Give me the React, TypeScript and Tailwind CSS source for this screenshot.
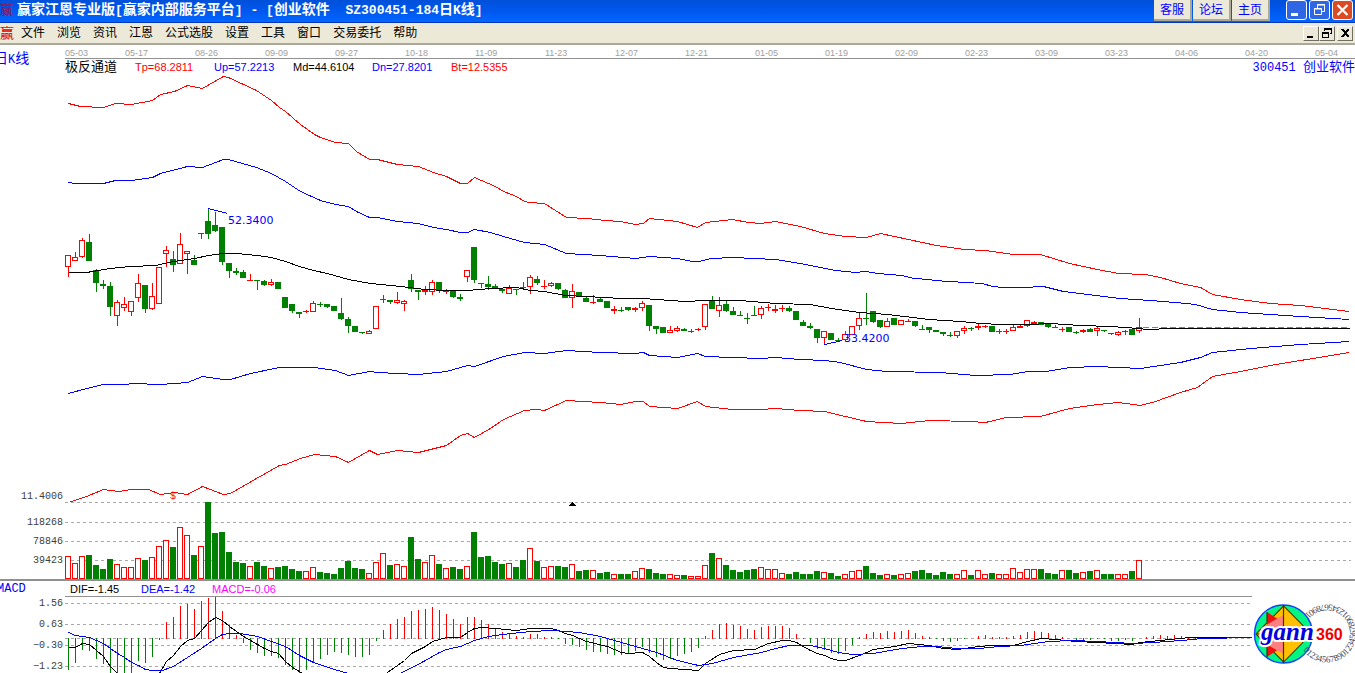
import React from 'react';

type Candle = ['r' | 'g', number, number, number, number, number];
type Point = [number, number];

const STEP = 7;
const FIRST_X = 68;
const RED = '#ff0000';
const GREEN = '#008000';
const BLUE = '#0000ff';

const MENU_ITEMS = ['文件', '浏览', '资讯', '江恩', '公式选股', '设置', '工具', '窗口', '交易委托', '帮助'];
const SERVICE_LINKS = ['客服', '论坛', '主页'];

const DATES = [
  '05-03', '05-17', '08-26', '09-09', '09-27', '10-18', '11-09', '11-23', '12-07', '12-21',
  '01-05', '01-19', '02-09', '02-23', '03-09', '03-23', '04-06', '04-20', '05-04',
];

// colour, high, body top, body bottom, low, volume top
const CANDLES: Candle[] = [
  ['r', 255, 255, 267, 277, 556], ['r', 252, 257, 261, 261, 563], ['r', 238, 240, 257, 258, 556], ['g', 234, 242, 261, 261, 555],
  ['g', 269, 270, 283, 292, 565], ['g', 280, 284, 286, 289, 569], ['g', 282, 286, 307, 316, 559], ['r', 300, 302, 316, 326, 564],
  ['r', 297, 304, 308, 311, 567], ['r', 301, 301, 312, 316, 567], ['r', 274, 283, 298, 302, 558], ['g', 285, 285, 309, 313, 560],
  ['r', 283, 296, 309, 310, 557], ['r', 267, 267, 304, 304, 546], ['r', 246, 250, 254, 267, 540], ['g', 251, 259, 265, 272, 547],
  ['r', 233, 244, 264, 264, 527], ['r', 251, 251, 254, 274, 535], ['g', 255, 260, 265, 265, 555], ['r', 233, 233, 234, 239, 546],
  ['g', 208, 221, 234, 239, 502], ['g', 212, 225, 231, 232, 533], ['g', 227, 227, 262, 265, 532], ['g', 263, 263, 271, 278, 552],
  ['g', 268, 271, 273, 275, 562], ['g', 270, 272, 278, 278, 563], ['r', 274, 280, 281, 281, 566], ['g', 280, 280, 281, 290, 562],
  ['g', 280, 281, 285, 286, 566], ['r', 279, 282, 285, 286, 568], ['g', 282, 282, 289, 289, 567], ['g', 297, 297, 308, 308, 566],
  ['g', 304, 304, 311, 313, 569], ['g', 312, 312, 314, 318, 571], ['r', 310, 311, 312, 313, 571], ['r', 301, 303, 312, 312, 567],
  ['g', 302, 304, 305, 307, 572], ['g', 304, 304, 307, 308, 573], ['g', 306, 306, 311, 311, 574], ['g', 298, 313, 319, 320, 568],
  ['g', 317, 319, 326, 333, 561], ['g', 326, 326, 332, 332, 568], ['g', 332, 332, 333, 334, 569], ['r', 330, 331, 334, 334, 573],
  ['r', 306, 306, 329, 329, 562], ['r', 295, 299, 300, 303, 553], ['g', 300, 300, 302, 304, 565], ['r', 292, 300, 303, 304, 564],
  ['r', 300, 301, 304, 311, 566], ['g', 274, 280, 289, 292, 537], ['g', 290, 290, 292, 300, 559], ['r', 286, 290, 292, 295, 562],
  ['r', 280, 282, 292, 295, 555], ['g', 282, 282, 291, 293, 564], ['r', 289, 291, 292, 294, 568], ['g', 291, 291, 297, 298, 567],
  ['g', 294, 297, 299, 301, 569], ['r', 270, 270, 277, 282, 566], ['g', 247, 247, 280, 283, 532], ['g', 283, 283, 284, 288, 557],
  ['g', 276, 284, 287, 290, 556], ['g', 284, 286, 288, 288, 562], ['g', 288, 289, 291, 293, 564], ['r', 285, 288, 294, 294, 563],
  ['g', 289, 289, 290, 295, 567], ['g', 282, 287, 288, 289, 560], ['r', 275, 277, 287, 294, 548], ['g', 276, 279, 283, 285, 561],
  ['r', 280, 286, 287, 289, 567], ['r', 282, 283, 286, 287, 566], ['g', 283, 283, 289, 290, 566], ['g', 289, 290, 298, 298, 567],
  ['r', 284, 291, 298, 308, 564], ['g', 292, 292, 296, 296, 571], ['g', 296, 298, 302, 302, 570], ['r', 295, 302, 303, 304, 570],
  ['g', 297, 299, 302, 302, 573], ['g', 301, 301, 308, 308, 572], ['r', 306, 309, 311, 314, 574], ['g', 307, 310, 311, 312, 574],
  ['g', 307, 307, 310, 311, 574], ['r', 307, 308, 310, 312, 571], ['r', 301, 303, 308, 311, 568], ['g', 305, 305, 326, 331, 569],
  ['g', 326, 326, 329, 334, 573], ['g', 327, 327, 333, 333, 574], ['r', 326, 330, 333, 333, 574], ['r', 326, 328, 331, 332, 575],
  ['g', 328, 329, 331, 331, 575], ['r', 329, 331, 332, 333, 576], ['r', 328, 329, 330, 331, 576], ['r', 304, 304, 327, 330, 565],
  ['g', 296, 300, 309, 309, 553], ['r', 297, 305, 311, 317, 558], ['g', 301, 304, 311, 312, 565], ['g', 307, 311, 315, 315, 570],
  ['g', 311, 315, 316, 316, 572], ['g', 313, 318, 319, 324, 570], ['g', 306, 315, 316, 316, 569], ['r', 306, 308, 315, 319, 567],
  ['r', 304, 307, 308, 311, 569], ['r', 305, 309, 311, 313, 569], ['r', 305, 308, 309, 312, 573], ['g', 306, 308, 311, 312, 574],
  ['g', 311, 311, 320, 320, 572], ['g', 320, 322, 326, 326, 574], ['g', 323, 326, 328, 329, 574], ['g', 329, 329, 338, 343, 571],
  ['r', 331, 331, 338, 344, 572], ['g', 333, 333, 340, 340, 573], ['g', 338, 340, 341, 342, 576], ['r', 331, 334, 340, 341, 574],
  ['r', 326, 326, 335, 335, 571], ['r', 313, 318, 326, 330, 570], ['g', 293, 318, 319, 325, 566], ['g', 311, 311, 322, 323, 573],
  ['g', 320, 320, 327, 328, 575], ['r', 318, 321, 327, 327, 574], ['g', 318, 318, 325, 325, 575], ['r', 320, 320, 325, 325, 574],
  ['r', 319, 321, 322, 322, 573], ['g', 321, 321, 326, 327, 571], ['g', 325, 329, 330, 330, 570], ['g', 327, 327, 330, 333, 573],
  ['g', 330, 330, 332, 332, 575], ['g', 332, 332, 334, 336, 572], ['g', 332, 335, 336, 337, 574], ['r', 331, 331, 336, 338, 574],
  ['r', 326, 328, 331, 334, 570], ['g', 327, 328, 329, 331, 575], ['r', 323, 326, 328, 330, 570], ['r', 325, 326, 327, 328, 574],
  ['g', 326, 326, 332, 332, 573], ['r', 329, 331, 332, 334, 574], ['r', 329, 331, 332, 334, 574], ['r', 325, 327, 331, 331, 568],
  ['r', 325, 326, 328, 328, 572], ['r', 320, 320, 326, 327, 569], ['r', 321, 322, 324, 325, 569], ['g', 322, 322, 325, 325, 569],
  ['g', 324, 324, 327, 328, 573], ['g', 325, 327, 328, 328, 574], ['r', 327, 329, 330, 332, 570], ['g', 327, 327, 332, 332, 570],
  ['g', 331, 332, 333, 334, 573], ['r', 329, 330, 332, 333, 572], ['g', 328, 329, 332, 332, 571], ['r', 327, 328, 331, 336, 570],
  ['g', 330, 330, 331, 332, 574], ['g', 333, 333, 334, 335, 574], ['r', 331, 332, 335, 336, 574], ['r', 330, 331, 332, 335, 574],
  ['g', 329, 329, 335, 335, 571], ['r', 318, 327, 331, 333, 560],
];

const MACD_ZERO = 638;
const MACD_BARS = [
  670, 663, 650, 651, 659, 664, 673, 673, 673, 673, 661, 663, 657, 640, 622, 617, 606, 604, 609, 601,
  598, 597, 611, 625, 635, 643, 650, 653, 656, 656, 658, 665, 670, 673, 670, 663, 659, 655, 652, 653,
  655, 657, 657, 655, 641, 630, 624, 619, 617, 611, 610, 609, 607, 610, 614, 619, 624, 617, 617, 620,
  624, 628, 632, 634, 636, 637, 634, 634, 637, 637, 639, 644, 645, 647, 650, 652, 652, 654, 655, 655,
  654, 651, 647, 653, 657, 660, 659, 656, 654, 652, 648, 636, 630, 624, 623, 625, 626, 629, 630, 627,
  626, 626, 626, 628, 634, 639, 643, 649, 650, 653, 654, 651, 645, 637, 634, 632, 633, 631, 632, 631,
  630, 633, 636, 637, 639, 641, 642, 641, 639, 638, 636, 635, 637, 637, 637, 636, 635, 632, 631, 632,
  633, 635, 637, 638, 640, 640, 640, 639, 639, 641, 641, 640, 641, 638, 637, 636, 635, 636, 635, 636,
  637, 637, 637, 637, 637,
];

const TP: Point[] = [
  [68, 103], [80, 106], [103, 107], [115, 103], [131, 104], [152, 100], [160, 94], [174, 91], [187, 85], [202, 88],
  [223, 76], [228, 77], [256, 90], [271, 100], [279, 107], [285, 111], [300, 124], [314, 134], [320, 137], [335, 142],
  [348, 143], [356, 151], [369, 159], [377, 159], [397, 164], [418, 166], [433, 172], [446, 176], [460, 183], [467, 183],
  [474, 177], [495, 186], [503, 191], [516, 196], [524, 201], [529, 202], [544, 203], [566, 217], [587, 218], [605, 220],
  [620, 221], [635, 224], [643, 223], [649, 218], [677, 221], [697, 227], [705, 222], [732, 219], [748, 222], [760, 223],
  [775, 221], [800, 226], [824, 233], [845, 236], [866, 237], [880, 233], [908, 239], [936, 245], [964, 249], [985, 250],
  [1013, 254], [1040, 254], [1069, 263], [1097, 269], [1118, 273], [1145, 274], [1160, 277], [1180, 283], [1200, 287], [1212, 294],
  [1240, 299], [1270, 303], [1300, 305], [1349, 311],
];

const UP: Point[] = [
  [68, 182], [75, 183], [103, 183], [115, 180], [131, 180], [152, 177], [160, 173], [187, 166], [202, 167], [223, 159],
  [228, 159], [256, 167], [271, 173], [285, 181], [300, 191], [320, 200], [335, 204], [348, 206], [356, 211], [369, 217],
  [377, 217], [397, 221], [418, 223], [433, 227], [446, 229], [460, 232], [467, 232], [474, 229], [490, 232], [503, 236],
  [524, 242], [544, 244], [566, 253], [600, 255], [635, 258], [649, 256], [677, 258], [692, 261], [698, 261], [711, 258],
  [732, 257], [775, 259], [800, 263], [835, 270], [855, 272], [865, 271], [877, 273], [902, 275], [913, 278], [930, 279],
  [933, 280], [982, 283], [992, 286], [1002, 287], [1022, 287], [1043, 286], [1063, 291], [1087, 294], [1120, 298], [1150, 300],
  [1175, 302], [1195, 304], [1212, 309], [1240, 312], [1270, 314], [1300, 316], [1349, 319],
];

const MD: Point[] = [
  [68, 272], [86, 272], [110, 268], [130, 266], [155, 265], [173, 261], [194, 258], [208, 255], [222, 253], [236, 253],
  [257, 255], [271, 257], [285, 261], [299, 266], [313, 270], [327, 273], [341, 277], [348, 279], [370, 283], [400, 286],
  [425, 289], [446, 290], [467, 290], [490, 288], [516, 287], [530, 290], [544, 291], [565, 295], [586, 296], [621, 298],
  [642, 298], [684, 301], [705, 300], [740, 300], [775, 303], [810, 304], [831, 308], [859, 312], [887, 314], [929, 319],
  [960, 321], [980, 323], [1000, 324], [1027, 324], [1050, 323], [1080, 325], [1110, 326], [1139, 328], [1146, 329], [1157, 329],
  [1160, 328], [1349, 328],
];

const DN: Point[] = [
  [68, 393], [86, 388], [103, 384], [125, 384], [132, 383], [160, 384], [187, 382], [202, 376], [223, 379], [230, 379],
  [250, 373], [279, 367], [314, 367], [335, 370], [348, 375], [369, 371], [377, 372], [418, 374], [446, 371], [467, 365],
  [474, 366], [503, 356], [524, 352], [544, 353], [566, 350], [600, 352], [635, 353], [643, 352], [649, 355], [677, 357],
  [697, 353], [705, 356], [760, 358], [775, 357], [800, 359], [824, 360], [840, 362], [866, 369], [887, 371], [940, 372],
  [975, 375], [1010, 374], [1027, 371], [1045, 371], [1070, 367], [1097, 366], [1118, 367], [1140, 368], [1160, 365], [1180, 362],
  [1200, 357], [1212, 352], [1250, 348], [1300, 344], [1349, 341],
];

const BT: Point[] = [
  [68, 502], [86, 496], [103, 489], [118, 491], [131, 489], [148, 489], [160, 494], [174, 492], [187, 494], [202, 486],
  [223, 494], [230, 493], [256, 478], [279, 465], [285, 464], [300, 458], [314, 454], [335, 456], [348, 462], [369, 450],
  [377, 454], [397, 450], [418, 452], [446, 445], [460, 435], [467, 433], [474, 437], [490, 428], [503, 419], [524, 410],
  [536, 409], [544, 410], [566, 400], [600, 402], [620, 404], [635, 401], [643, 401], [649, 406], [677, 408], [697, 401],
  [705, 406], [732, 409], [760, 409], [775, 408], [800, 410], [824, 411], [845, 416], [866, 421], [901, 423], [929, 420],
  [970, 421], [985, 422], [1006, 417], [1040, 416], [1069, 408], [1097, 404], [1118, 402], [1140, 405], [1155, 401], [1180, 392],
  [1197, 387], [1212, 376], [1240, 371], [1270, 365], [1300, 360], [1349, 352],
];

const DIF: Point[] = [
  [68, 647], [75, 647], [82, 643], [89, 644], [96, 650], [103, 656], [110, 666], [117, 673], [138, 682], [152, 681],
  [159, 673], [166, 661], [173, 655], [180, 646], [187, 640], [194, 638], [201, 630], [208, 622], [215, 617], [222, 620],
  [229, 626], [236, 631], [243, 636], [250, 640], [257, 644], [264, 648], [271, 651], [278, 653], [285, 661], [292, 667],
  [299, 671], [306, 676], [350, 690], [380, 679], [387, 672], [397, 665], [404, 660], [411, 653], [425, 646], [432, 641],
  [439, 639], [446, 637], [460, 637], [467, 632], [474, 628], [481, 627], [495, 628], [516, 630], [530, 628], [551, 628],
  [558, 630], [565, 633], [572, 635], [586, 641], [607, 646], [621, 652], [628, 653], [642, 652], [649, 656], [656, 662],
  [663, 667], [670, 668], [698, 670], [705, 663], [719, 654], [733, 650], [754, 649], [768, 643], [782, 640], [789, 640],
  [796, 642], [810, 650], [817, 653], [824, 655], [831, 658], [838, 660], [845, 660], [859, 655], [873, 649], [894, 646],
  [908, 643], [929, 645], [943, 648], [957, 649], [978, 646], [992, 645], [1013, 645], [1027, 641], [1041, 638], [1055, 639],
  [1076, 641], [1097, 642], [1132, 644], [1139, 642], [1160, 640], [1190, 637], [1252, 637],
];

const DEA: Point[] = [
  [68, 632], [75, 635], [89, 637], [96, 640], [103, 643], [110, 648], [117, 653], [124, 657], [131, 662], [138, 665],
  [145, 669], [152, 670], [162, 670], [173, 666], [187, 657], [201, 648], [215, 638], [222, 634], [229, 633], [240, 633],
  [257, 636], [271, 641], [285, 646], [299, 655], [313, 662], [334, 669], [348, 673], [370, 680], [390, 679], [400, 673],
  [425, 660], [439, 652], [446, 649], [460, 646], [474, 640], [488, 636], [502, 634], [530, 631], [551, 630], [565, 631],
  [579, 632], [600, 636], [614, 640], [635, 646], [656, 652], [677, 660], [698, 665], [712, 663], [733, 657], [761, 652],
  [775, 648], [789, 645], [810, 645], [824, 648], [838, 652], [852, 654], [873, 653], [901, 648], [922, 646], [936, 646],
  [957, 648], [978, 648], [999, 646], [1020, 645], [1034, 643], [1048, 641], [1072, 640], [1097, 641], [1132, 643], [1153, 642],
  [1181, 640], [1202, 638], [1252, 637],
];

const VOLUME_TICKS = [
  { y: 522, label: '118268' },
  { y: 541, label: '78846' },
  { y: 560, label: '39423' },
];

const MACD_TICKS = [
  { y: 603, label: '1.56' },
  { y: 624, label: '0.63' },
  { y: 645, label: '−0.30' },
  { y: 666, label: '−1.23' },
];

const xAt = (i: number) => FIRST_X + i * STEP;

const Curve: React.FC<{ points: Point[]; color: string }> = ({ points, color }) => (
  <polyline
    points={points.map(([x, y]) => `${x + 0.5},${y + 0.5}`).join(' ')}
    fill="none"
    stroke={color}
    strokeWidth="1"
    shapeRendering="crispEdges"
  />
);

const GridLine: React.FC<{ y: number; to: number }> = ({ y, to }) => (
  <line x1="65" x2={to} y1={y + 0.5} y2={y + 0.5} stroke="#a8a8a8" strokeDasharray="3 3" shapeRendering="crispEdges" />
);

const AxisLabel: React.FC<{ y: number; children: React.ReactNode }> = ({ y, children }) => (
  <text x="63" y={y} textAnchor="end" fill="#404040" className="font-['Liberation_Mono',monospace] text-[10px]">
    {children}
  </text>
);

const CandleShape: React.FC<{ candle: Candle; x: number }> = ({ candle, x }) => {
  const [kind, high, top, bottom, low] = candle;
  const color = kind === 'r' ? RED : GREEN;
  const hollow = kind === 'r' && bottom - top > 2;
  return (
    <g shapeRendering="crispEdges">
      {low > high && <rect x={x} y={high} width="1" height={low - high} fill={color} />}
      <rect x={x - 3} y={top} width="6" height={bottom - top} fill={color} />
      {hollow && <rect x={x - 2} y={top + 1} width="4" height={bottom - top - 2} fill="#fff" />}
    </g>
  );
};

const PriceChart = () => (
  <svg viewBox="0 75 1355 427" className="block w-full" role="img" aria-label="日K线">
    {CANDLES.map((candle, i) => (
      <CandleShape key={i} candle={candle} x={xAt(i)} />
    ))}
    <Curve points={TP} color={RED} />
    <Curve points={UP} color={BLUE} />
    <line x1="1143" x2="1350" y1="327.5" y2="327.5" stroke="#808080" strokeDasharray="6 3" shapeRendering="crispEdges" />
    <Curve points={MD} color="#000" />
    <Curve points={DN} color={BLUE} />
    <Curve points={BT} color={RED} />
    <Curve points={[[208, 208], [227, 213]]} color={BLUE} />
    <Curve points={[[824, 344], [842, 340]]} color={BLUE} />
    <g fill={BLUE} className="font-['DejaVu_Sans',sans-serif] text-[11px]">
      <text x="228" y="224">52.3400</text>
      <text x="844" y="342">33.4200</text>
    </g>
    <text x="170" y="499" fill={RED} className="font-['Liberation_Mono',monospace] text-[10px]">$</text>
    <AxisLabel y={499}>11.4006</AxisLabel>
  </svg>
);

const VolumeChart = () => (
  <svg viewBox="0 502 1355 77" className="block w-full" role="img" aria-label="118268">
    <GridLine y={502} to={1351} />
    {VOLUME_TICKS.map((tick) => (
      <g key={tick.y}>
        <GridLine y={tick.y} to={1351} />
        <AxisLabel y={tick.y + 3}>{tick.label}</AxisLabel>
      </g>
    ))}
    <path d="M572 502h1v1h1v1h1v1h1v1h-7v-1h1v-1h1v-1h1z" fill="#000" shapeRendering="crispEdges" />
    {CANDLES.map(([kind, , , , , top], i) => (
      <g key={i} shapeRendering="crispEdges">
        <rect x={xAt(i) - 3} y={top} width="6" height={579 - top} fill={kind === 'r' ? RED : GREEN} />
        {kind === 'r' && <rect x={xAt(i) - 2} y={top + 1} width="4" height={577 - top} fill="#fff" />}
      </g>
    ))}
  </svg>
);

const MacdChart = () => (
  <svg viewBox="0 597 1252 76" className="block w-full" role="img" aria-label="MACD">
    {MACD_TICKS.map((tick) => (
      <g key={tick.y}>
        <GridLine y={tick.y} to={1252} />
        <AxisLabel y={tick.y + 3}>{tick.label}</AxisLabel>
      </g>
    ))}
    <GridLine y={MACD_ZERO} to={1252} />
    {MACD_BARS.map((end, i) => (
      <rect
        key={i}
        x={xAt(i)}
        y={Math.min(end, MACD_ZERO)}
        width="1"
        height={Math.abs(end - MACD_ZERO) + (end < MACD_ZERO ? 1 : 0)}
        fill={end < MACD_ZERO ? RED : GREEN}
        shapeRendering="crispEdges"
      />
    ))}
    <Curve points={DIF} color="#000" />
    <Curve points={DEA} color={BLUE} />
  </svg>
);

const GannLogo = () => (
  <svg viewBox="0 0 103 92" className="block h-[92px] w-[103px] shrink-0" role="img" aria-label="gann360">
    <circle cx="31.500" cy="53" r="29" fill="#00f582" stroke="#1040ff" strokeWidth="1.4" />
    <path d="M31.500 25 59 53 31.500 81 4 53z" fill="#ffc000" stroke="#404000" strokeWidth="1.2" />
    <path d="M15 31 49 53 15 76z" fill="#f01010" />
    <path d="M31.500 34 52 53 31.500 73 9 60 9 47z" fill="#ff8080" />
    <path d="M31.500 25 59 53 31.500 81z" fill="#ffc000" stroke="#404000" />
    <path d="M31.500 24v58M4 53h55M15 31v10M15 66v10" stroke="#303818" strokeWidth="1.2" fill="none" />
    <path id="digit-ring" d="M51 69 A29 29 0 1 0 51 36" fill="none" />
    <text fill="#404058" className="font-['Liberation_Serif',serif] text-[9px]">
      <textPath href="#digit-ring">01234567890123456789012345678901</textPath>
    </text>
    <text
      x="9"
      y="59"
      fill="#0000e0"
      stroke="#fff"
      strokeWidth="4"
      strokeLinejoin="round"
      paintOrder="stroke"
      className="font-['Liberation_Serif',serif] text-[25px] font-bold italic"
    >
      gann
    </text>
    <text
      x="64"
      y="59"
      fill="#f00000"
      stroke="#fff"
      strokeWidth="2"
      paintOrder="stroke"
      className="font-['Liberation_Sans',sans-serif] text-[16px] font-bold"
    >
      360
    </text>
  </svg>
);

const Latin: React.FC<{ children: React.ReactNode }> = ({ children }) => (
  <span className="font-['Liberation_Mono',monospace] text-[12px]">{children}</span>
);

const TitleLatin: React.FC<{ children: React.ReactNode }> = ({ children }) => (
  <span className="font-['Liberation_Mono',monospace] text-[13px]">{children}</span>
);

const TitleBar = () => (
  <header className="flex h-[23px] items-start overflow-hidden border-b border-[#0038b8] bg-linear-to-b from-[#0050d8] via-[#0058ee] to-[#0066ff]">
    <span className="w-[17px] shrink-0 text-[13px] leading-[19px] text-[#a01050]">赢</span>
    <h1 className="flex-1 truncate whitespace-pre text-[14px] leading-[19px] font-bold text-white">
      赢家江恩专业版<TitleLatin>[</TitleLatin>赢家内部服务平台<TitleLatin>] - [</TitleLatin>创业软件
      <TitleLatin>{'  SZ300451-184'}</TitleLatin>日<TitleLatin>K</TitleLatin>线<TitleLatin>]</TitleLatin>
    </h1>
    <nav className="flex gap-px">
      {SERVICE_LINKS.map((label) => (
        <button
          key={label}
          className="h-[21px] w-[38px] border-r-2 border-b-2 border-[#aca899] bg-[#ece9d8] text-[12px] leading-[18px] text-[#0000ff]"
        >
          {label}
        </button>
      ))}
    </nav>
    <div className="mr-[2px] ml-4 flex gap-[2px]">
      <button aria-label="最小化" className="h-5 w-[21px] rounded-[3px] border border-white bg-[#2f66e4]">
        <svg viewBox="0 0 19 18" className="block w-full"><path d="M4 12h7v3H4z" fill="#fff" /></svg>
      </button>
      <button aria-label="还原" className="h-5 w-[21px] rounded-[3px] border border-white bg-[#2f66e4]">
        <svg viewBox="0 0 19 18" className="block w-full" fill="none" stroke="#fff">
          <path d="M7.500 7V3.500h7v7H12M7 4h8" />
          <path d="M4.500 7.500h7v6h-7zM4 8h8" />
        </svg>
      </button>
      <button aria-label="关闭" className="h-5 w-[21px] rounded-[3px] border border-white bg-[#dc4a24]">
        <svg viewBox="0 0 19 18" className="block w-full"><path d="M4.500 4l10 10M14.500 4l-10 10" stroke="#fff" strokeWidth="2.200" /></svg>
      </button>
    </div>
  </header>
);

const MdiButton: React.FC<{ label: string; children: React.ReactNode }> = ({ label, children }) => (
  <button
    aria-label={label}
    className="block h-[15px] w-4 border border-t-white border-r-[#716f64] border-b-[#716f64] border-l-white bg-[#ece9d8]"
  >
    <svg viewBox="0 0 14 13" className="block w-full" shapeRendering="crispEdges">{children}</svg>
  </button>
);

const MenuBar = () => (
  <div className="flex h-[22px] items-center border-b-2 border-[#aca899] bg-[#ece9d8]">
    <span className="w-[21px] shrink-0 text-[14px] leading-5 text-[#e00000]">赢</span>
    <nav className="flex flex-1 gap-3 text-[12px] leading-5 text-black">
      {MENU_ITEMS.map((item) => (
        <button key={item} className="whitespace-nowrap">{item}</button>
      ))}
    </nav>
    <div className="mr-[2px] flex items-center">
      <MdiButton label="最小化窗口"><path d="M3 9h6v2H3z" /></MdiButton>
      <MdiButton label="还原窗口">
        <path d="M4 1h8v6h-2V6h1V3H5v1H4zM2 5h7v6H2zM3 7v3h5V7z" fillRule="evenodd" />
      </MdiButton>
      <div className="ml-[2px]">
        <MdiButton label="关闭窗口"><path d="M3 2h2l2 2 2-2h2v1L8 6l3 3v1H9L7 8l-2 2H3V9l3-3-3-3z" /></MdiButton>
      </div>
    </div>
  </div>
);

const App = () => {
  return (
    <div className="w-full overflow-hidden bg-white font-['Liberation_Sans','Noto_Sans_CJK_SC',sans-serif]">
      <TitleBar />
      <MenuBar />

      <main>
        <div className="flex h-[30px]">
          <h2 className="-ml-[6px] w-[71px] shrink-0 text-[14px] leading-[26px] text-[#0000ff]">
            日<Latin>K</Latin>线
          </h2>
          <div className="min-w-0 flex-1">
            <svg viewBox="65 0 1290 13" className="box-content block w-full border-b border-[#909090]">
              {DATES.map((date, i) => (
                <text
                  key={date}
                  x={i === 0 ? 65 : 55 + i * 70}
                  y="11"
                  fill="#a0a0a0"
                  className="font-['Liberation_Sans',sans-serif] text-[9px]"
                >
                  {date}
                </text>
              ))}
            </svg>
            <div className="flex h-4 items-center text-[11px] leading-4 whitespace-nowrap">
              <span className="w-[70px] text-[13px]">极反通道</span>
              <span className="w-[79px] text-[#ff0000]">Tp=68.2811</span>
              <span className="w-[79px] text-[#0000ff]">Up=57.2213</span>
              <span className="w-[79px]">Md=44.6104</span>
              <span className="w-[79px] text-[#0000ff]">Dn=27.8201</span>
              <span className="w-[79px] text-[#ff0000]">Bt=12.5355</span>
              <span className="ml-auto text-[13px] text-[#0000ff]">
                <Latin>300451 </Latin>创业软件
              </span>
            </div>
          </div>
        </div>

        <PriceChart />
        <VolumeChart />

        <section className="flex border-t-2 border-[#909090]">
          <div className="min-w-0 flex-1">
            <div className="flex h-4">
              <h2 className="-ml-[3px] w-[68px] shrink-0 font-['Liberation_Mono',monospace] text-[12px] leading-4 text-[#0000ff]">
                MACD
              </h2>
              <div className="flex flex-1 border-b border-[#909090] pl-[5px] text-[11px] leading-4 whitespace-nowrap">
                <span className="w-[71px]">DIF=-1.45</span>
                <span className="w-[71px] text-[#0000ff]">DEA=-1.42</span>
                <span className="text-[#ff00ff]">MACD=-0.06</span>
              </div>
            </div>
            <MacdChart />
          </div>
          <GannLogo />
        </section>
      </main>
    </div>
  );
};

export default App;
